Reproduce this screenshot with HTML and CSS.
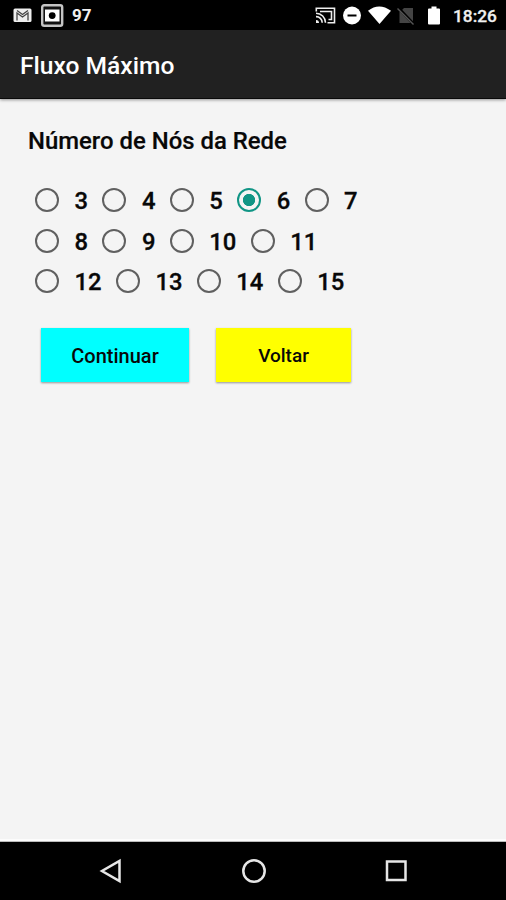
FILE: index.html
```html
<!DOCTYPE html>
<html lang="pt">
<head>
<meta charset="utf-8">
<title>Fluxo Máximo</title>
<link rel="stylesheet" href="styles.css">
</head>
<body>
<div class="status">
  <svg class="status-icons" width="60" height="30" viewBox="0 0 60 30">
    <rect x="1.500" y="8.500" width="18" height="13.500" rx="1.500" fill="#eee"/>
    <path d="M5 20.500v-7.500l5.500 4 5.500-4v7.500M5 10.500l5.500 4 5.500-4" fill="none" stroke="#444" stroke-width="1.300"/>
    <rect x="30.200" y="5.200" width="20" height="20.600" rx="2" fill="#111" stroke="#c4c4c4" stroke-width="2.400"/>
    <path d="M33 9.500h14.500v12h-14.500z" fill="#fff"/>
    <circle cx="40.200" cy="15.600" r="3.400" fill="#000"/>
  </svg>
  <span class="battery-level">97</span>
  <svg class="system-icons" width="132" height="30" viewBox="0 0 132 30">
    <g fill="none" stroke="#eee" stroke-width="1.600">
      <path d="M1.300 11.500V8.300h18.200v14.400h-7"/>
      <path d="M1 13.200a9.500 9.500 0 0 1 9.500 9.500M1 16.600a6 6 0 0 1 6.200 6.100"/>
      <path d="M5 11.500h11.500v8h-3"/>
    </g>
    <path d="M1 20a3 3 0 0 1 3 3H1z" fill="#eee"/>
    <circle cx="37" cy="15.500" r="9" fill="#fff"/>
    <path d="M32.500 15.500h9" stroke="#000" stroke-width="2"/>
    <path d="M53 10.800Q64 2.200 76 10.800L64.500 24z" fill="#fff"/>
    <path d="M89 8h9v15H84.500V12.500z" fill="#444"/>
    <path d="M83 7.500l16 17" stroke="#000" stroke-width="3"/>
    <path d="M82.500 8.500l16 16" stroke="#555" stroke-width="1.400"/>
    <path d="M116.500 6.500h5v2h2.500a1 1 0 0 1 1 1v14a1 1 0 0 1-1 1h-10a1 1 0 0 1-1-1v-14a1 1 0 0 1 1-1h2.500z" fill="#fff"/>
  </svg>
  <span class="clock">18:26</span>
</div>
<header class="app-bar"><h1>Fluxo Máximo</h1></header>
<main>
  <h2>Número de Nós da Rede</h2>
  <div class="options">
    <div class="row">
      <label><i class="radio"></i><span>3</span></label>
      <label><i class="radio"></i><span>4</span></label>
      <label><i class="radio"></i><span>5</span></label>
      <label><i class="radio checked"></i><span>6</span></label>
      <label><i class="radio"></i><span>7</span></label>
    </div>
    <div class="row">
      <label><i class="radio"></i><span>8</span></label>
      <label><i class="radio"></i><span>9</span></label>
      <label><i class="radio"></i><span>10</span></label>
      <label><i class="radio"></i><span>11</span></label>
    </div>
    <div class="row">
      <label><i class="radio"></i><span>12</span></label>
      <label><i class="radio"></i><span>13</span></label>
      <label><i class="radio"></i><span>14</span></label>
      <label><i class="radio"></i><span>15</span></label>
    </div>
  </div>
  <div class="actions">
    <button class="continue">Continuar</button>
    <button class="back">Voltar</button>
  </div>
</main>
<nav>
  <svg width="26" height="30" viewBox="0 0 26 30"><path d="M20.500 5v20L3 15z"/></svg>
  <svg width="26" height="30" viewBox="0 0 26 30"><circle cx="13" cy="15" r="10.700"/></svg>
  <svg width="26" height="30" viewBox="0 0 26 30"><rect x="4" y="5.500" width="18.500" height="18.500"/></svg>
</nav>
</body>
</html>
```
FILE: styles.css
```css
* { box-sizing: border-box; }
body {
  margin: 0;
  height: 900px;
  display: flex;
  flex-direction: column;
  background: #f4f4f4;
  color: #080808;
  font-family: Roboto, "Liberation Sans", sans-serif;
  font-weight: 500;
  overflow: hidden;
}
.status {
  flex: none;
  height: 30px;
  display: flex;
  align-items: center;
  padding-left: 12px;
  background: #000;
  color: #f0f0f0;
  line-height: 30px;
}
.battery-level { width: 243px; font-size: 17px; font-weight: 700; }
.system-icons { flex: none; }
.clock {
  margin-left: 6px;
  padding-top: 2px;
  font-size: 17.3px;
  -webkit-text-stroke: .3px #f0f0f0;
}
.app-bar {
  flex: none;
  height: 69px;
  padding-left: 20px;
  background: #212121;
  border-bottom: 1px solid #0a0a0a;
  box-shadow: 0 1px 3px rgba(0, 0, 0, .4);
}
h1, h2 { margin: 0; font-weight: 500; white-space: nowrap; }
h1 { color: #fff; font-size: 24.6px; line-height: 72px; }
main { flex: 1; padding: 26px 0 0 28px; }
h2 { font-size: 23.9px; line-height: 32px; -webkit-text-stroke: .2px #080808; }
.options { padding: 23px 0 0 7px; }
.row { display: flex; height: 40.5px; }
label {
  display: flex;
  align-items: center;
  height: 40px;
  padding-right: 14.35px;
  font-size: 23.8px;
  line-height: 40px;
  -webkit-text-stroke: .3px #080808;
}
label span { padding-top: 2px; }
.radio {
  width: 24px;
  height: 24px;
  margin-right: 15.5px;
  border: 2px solid #606060;
  border-radius: 50%;
}
.checked {
  border-color: #109585;
  background: radial-gradient(circle, #109585 0 5.8px, transparent 6.5px);
}
.actions { display: flex; gap: 27px; padding: 26px 0 0 13px; }
button {
  height: 54px;
  padding: 2px 0 0;
  border: 0;
  color: #080808;
  font: 500 20px Roboto, sans-serif;
  box-shadow: 0 1px 2px rgba(0, 0, 0, .4);
}
.continue { width: 148px; background: #0ff; }
.back { width: 135px; background: #ff0; font-size: 19px; }
nav {
  flex: none;
  height: 58px;
  display: flex;
  justify-content: center;
  gap: 116px;
  padding: 14px 0 0 2px;
  background: #000;
  box-shadow: 0 -1px 0 #bbb, 0 -3px 0 #fcfcfc;
}
nav path, nav circle, nav rect { fill: none; stroke: #e6e6e6; stroke-width: 2.5; }
```
